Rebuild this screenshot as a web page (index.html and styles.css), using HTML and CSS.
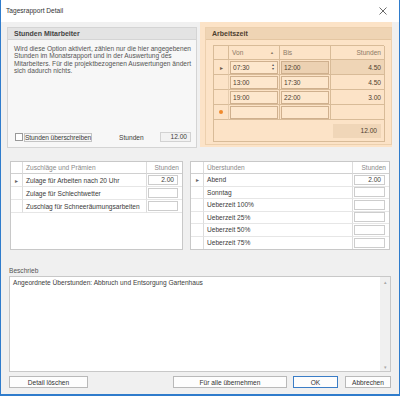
FILE: index.html
```html
<!DOCTYPE html>
<html>
<head>
    <title>Tagesrapport Detail</title>
    <link rel="stylesheet" href="styles.css">
</head>
<body>
<div class="window">
    <div class="titlebar">
        <span class="title">Tagesrapport Detail</span>
        <svg class="close" width="8" height="8" viewBox="0 0 8 8"><path d="M0.5 0.5L7.5 7.5M7.5 0.5L0.5 7.5" stroke="#444" stroke-width="0.8"/></svg>
    </div>

    <div class="top">
        <div class="group">
            <div class="group-head">Stunden Mitarbeiter</div>
            <div class="group-body">
                <p class="info">Wird diese Option aktiviert, zählen nur die hier angegebenen<br>Stunden im Monatsrapport und in der Auswertung des<br>Mitarbeiters. Für die projektbezogenen Auswertungen ändert<br>sich dadurch nichts.</p>
                <div class="override">
                    <span class="check"></span>
                    <span class="check-label">Stunden überschreiben</span>
                    <span class="hours-label">Stunden</span>
                    <span class="field">12.00</span>
                </div>
            </div>
        </div>

        <div class="highlight">
            <div class="group peach">
                <div class="group-head">Arbeitszeit</div>
                <div class="time-grid">
                    <div class="tc head"></div>
                    <div class="tc head sort">Von <span class="arrow">&#9650;</span></div>
                    <div class="tc head">Bis</div>
                    <div class="tc head num">Stunden</div>

                    <div class="tc ind">&#9656;</div>
                    <div class="tc"><span class="tbox editing">07:30<span class="spin">&#9652;<br>&#9662;</span></span></div>
                    <div class="tc"><span class="tbox sel">12:00</span></div>
                    <div class="tc num sel">4.50</div>

                    <div class="tc ind"></div>
                    <div class="tc"><span class="tbox">13:00</span></div>
                    <div class="tc"><span class="tbox">17:30</span></div>
                    <div class="tc num">4.50</div>

                    <div class="tc ind"></div>
                    <div class="tc"><span class="tbox">19:00</span></div>
                    <div class="tc"><span class="tbox">22:00</span></div>
                    <div class="tc num">3.00</div>

                    <div class="tc ind"><span class="newrow"></span></div>
                    <div class="tc"><span class="tbox"></span></div>
                    <div class="tc"><span class="tbox"></span></div>
                    <div class="tc num"></div>

                    <div class="tc foot"><span class="sum">12.00</span></div>
                </div>
            </div>
        </div>
    </div>

    <div class="middle">
        <div class="grid left-grid">
            <div class="gc head"></div>
            <div class="gc head">Zuschläge und Prämien</div>
            <div class="gc head num">Stunden</div>

            <div class="gc ind">&#9656;</div>
            <div class="gc name">Zulage für Arbeiten nach 20 Uhr</div>
            <div class="gc"><span class="vbox">2.00</span></div>

            <div class="gc ind"></div>
            <div class="gc name">Zulage für Schlechtwetter</div>
            <div class="gc"><span class="vbox"></span></div>

            <div class="gc ind"></div>
            <div class="gc name">Zuschlag für Schneeräumungsarbeiten</div>
            <div class="gc"><span class="vbox"></span></div>

            <div class="gc empty"></div>
            <div class="gc empty"></div>
            <div class="gc empty"></div>
        </div>

        <div class="grid right-grid">
            <div class="gc head"></div>
            <div class="gc head">Überstunden</div>
            <div class="gc head num">Stunden</div>

            <div class="gc ind">&#9656;</div>
            <div class="gc name">Abend</div>
            <div class="gc"><span class="vbox">2.00</span></div>

            <div class="gc ind"></div>
            <div class="gc name">Sonntag</div>
            <div class="gc"><span class="vbox"></span></div>

            <div class="gc ind"></div>
            <div class="gc name">Ueberzeit 100%</div>
            <div class="gc"><span class="vbox"></span></div>

            <div class="gc ind"></div>
            <div class="gc name">Ueberzeit 25%</div>
            <div class="gc"><span class="vbox"></span></div>

            <div class="gc ind"></div>
            <div class="gc name">Ueberzeit 50%</div>
            <div class="gc"><span class="vbox"></span></div>

            <div class="gc ind last"></div>
            <div class="gc name last">Ueberzeit 75%</div>
            <div class="gc last"><span class="vbox"></span></div>
        </div>
    </div>

    <div class="notes">
        <div class="notes-label">Beschrieb</div>
        <div class="memo">
            <div class="memo-text">Angeordnete Überstunden: Abbruch und Entsorgung Gartenhaus</div>
            <div class="scrollbar">
                <span>&#9652;</span>
                <span>&#9662;</span>
            </div>
        </div>
    </div>

    <div class="buttons">
        <button class="btn wide">Detail löschen</button>
        <span class="spacer"></span>
        <button class="btn all">Für alle übernehmen</button>
        <button class="btn ok">OK</button>
        <button class="btn cancel">Abbrechen</button>
    </div>
</div>
</body>
</html>
```

FILE: styles.css
```css
* {
    box-sizing: border-box;
}

body {
    margin: 0;
    font-family: "Liberation Sans", Arial, sans-serif;
    font-size: 6.6px;
    color: #3c3c3c;
}

.window {
    width: 400px;
    height: 396px;
    background: #f0f0f0;
    border-left: 1px solid #2f7ccc;
    border-right: 1px solid #2f7ccc;
    border-bottom: 2px solid #2f7ccc;
    display: flex;
    flex-direction: column;
}

.titlebar {
    height: 22px;
    background: #fff;
    display: flex;
    align-items: center;
    justify-content: space-between;
    padding: 0 12px 2px 5px;
    color: #333;
}

.close {
    margin-top: 1px;
}

/* top area */

.top {
    height: 126px;
    display: flex;
    align-items: flex-start;
    padding: 0 7px 0 6px;
    gap: 3px;
}

.group {
    margin-top: 5px;
    width: 190px;
    height: 121px;
    border: 1px solid #d4d4d4;
    background: #f7f7f7;
    display: flex;
    flex-direction: column;
}

.group-head {
    height: 12px;
    background: #e3e3e3;
    border-bottom: 1px solid #d4d4d4;
    font-weight: bold;
    font-size: 7px;
    color: #444;
    padding-left: 6px;
    line-height: 12px;
}

.group-body {
    flex: 1;
    display: flex;
    flex-direction: column;
    padding: 5px 5px 5px 6px;
}

.info {
    margin: 0;
    line-height: 7.4px;
    white-space: nowrap;
    color: #555;
}

.override {
    margin-top: auto;
    display: flex;
    align-items: center;
    height: 10px;
}

.check {
    width: 8px;
    height: 8px;
    border: 1px solid #999;
    background: #fff;
    margin-left: 1px;
}

.check-label {
    margin-left: 1px;
    padding: 0;
    border: 1px solid #c4c4c4;
    line-height: 7px;
    letter-spacing: -0.1px;
}

.hours-label {
    margin-left: 27px;
}

.field {
    margin-left: auto;
    width: 31px;
    height: 10px;
    border: 1px solid #d2d2d2;
    background: #f2f2f2;
    text-align: right;
    padding-right: 3px;
    line-height: 8px;
}

/* Arbeitszeit */

.highlight {
    width: 192px;
    height: 125px;
    background: #fce3c7;
    padding: 5px 0 0 5px;
}

.group.peach {
    margin-top: 0;
    width: 187px;
    height: 118px;
    background: #fce3c7;
    border-color: #ecd0ae;
}

.peach .group-head {
    background: #efd4b4;
    border-bottom-color: #e4c6a2;
    color: #4e3f30;
}

.time-grid {
    margin: 5px 7px 0 7px;
    display: grid;
    grid-template-columns: 15px 51px 51px 54px;
    grid-template-rows: 14px repeat(4, 15px) 22px;
    border: 1px solid #d8bb98;
    border-right: none;
    border-bottom: none;
    width: 171px;
}

.tc {
    border-right: 1px solid #d8bb98;
    border-bottom: 1px solid #d8bb98;
    display: flex;
    align-items: center;
    padding: 0 1px;
    color: #4e4030;
    position: relative;
}

.tc.head {
    color: #8d7a66;
    padding-left: 3px;
}

.tc.sort .arrow {
    position: absolute;
    right: 5px;
    font-size: 4px;
}

.tc.num {
    justify-content: flex-end;
    padding-right: 3px;
}

.tc.sel {
    background: #efd5b6;
}

.tc.ind {
    justify-content: center;
    font-size: 6px;
    color: #6b5a48;
    border-right-color: #e6cdaf;
}

.newrow {
    width: 4px;
    height: 4px;
    border-radius: 50%;
    background: #f08a2c;
}

.tbox {
    width: 100%;
    height: 13px;
    border: 1px solid #cfb08e;
    background: #fde7cd;
    display: flex;
    align-items: center;
    padding-left: 2px;
    position: relative;
}

.tbox.sel {
    background: #ecd1b2;
}

.spin {
    position: absolute;
    right: 3px;
    top: 1px;
    font-size: 4px;
    line-height: 4.5px;
    color: #555;
}

.tc.foot {
    grid-column: 1 / 5;
    justify-content: flex-end;
    padding-right: 3px;
}

.sum {
    width: 48px;
    height: 14px;
    background: #f0d6b8;
    display: flex;
    align-items: center;
    justify-content: flex-end;
    padding-right: 4px;
}

/* grids */

.middle {
    margin-top: 13px;
    height: 89px;
    display: flex;
    gap: 7px;
    padding: 0 9px;
}

.grid {
    display: grid;
    height: 89px;
    border: 1px solid #c8c8c8;
    background: #fff;
}

.left-grid {
    width: 173px;
    grid-template-columns: 12px 124px 35px;
    grid-template-rows: 12px repeat(3, 13px) 1fr;
}

.right-grid {
    width: 200px;
    grid-template-columns: 13px 149px 36px;
    grid-template-rows: 12px repeat(6, 1fr);
}

.gc {
    border-right: 1px solid #dcdcdc;
    border-bottom: 1px solid #e6e6e6;
    display: flex;
    align-items: center;
    padding: 0 2px 0 3px;
    white-space: nowrap;
    overflow: hidden;
}

.gc.head {
    color: #8a8a8a;
    border-bottom-color: #d0d0d0;
}

.gc.num {
    justify-content: flex-end;
    padding-right: 3px;
}

.gc:nth-child(3n) {
    border-right: none;
}

.gc.ind {
    justify-content: center;
    padding: 0;
    font-size: 6px;
    color: #666;
}

.gc.empty,
.gc.last {
    border-bottom: none;
}

.gc.empty {
    border-right: none;
}

.gc.name {
    color: #3a3a3a;
}

.vbox {
    width: 100%;
    height: 10px;
    margin: 0 -1px 0 -2px;
    border: 1px solid #cdcdcd;
    text-align: right;
    padding-right: 3px;
    line-height: 8px;
}

/* notes */

.notes {
    margin-top: 17px;
    padding: 0 8px;
}

.notes-label {
    height: 9px;
    line-height: 8px;
    color: #555;
}

.memo {
    height: 96px;
    border: 1px solid #c8c8c8;
    background: #fff;
    display: flex;
}

.memo-text {
    flex: 1;
    padding: 2px 3px;
}

.scrollbar {
    width: 10px;
    background: #f0f0f0;
    display: flex;
    flex-direction: column;
    justify-content: space-between;
    align-items: center;
    font-size: 5px;
    color: #a8a8a8;
    padding: 2px 0 1px;
}

/* buttons */

.buttons {
    margin-top: 4px;
    display: flex;
    padding: 0 8px;
    height: 12px;
}

.spacer {
    flex: 1;
}

.btn {
    height: 12px;
    padding: 0;
    font-family: inherit;
    font-size: 6.6px;
    color: #333;
    background: #fdfdfd;
    border: 1px solid #b9b9b9;
}

.btn.wide {
    width: 79px;
}

.btn.all {
    width: 114px;
}

.btn.ok {
    width: 45px;
    margin-left: 6px;
    border: 1px solid #3b7dc6;
}

.btn.cancel {
    width: 46px;
    margin-left: 7px;
}
```
